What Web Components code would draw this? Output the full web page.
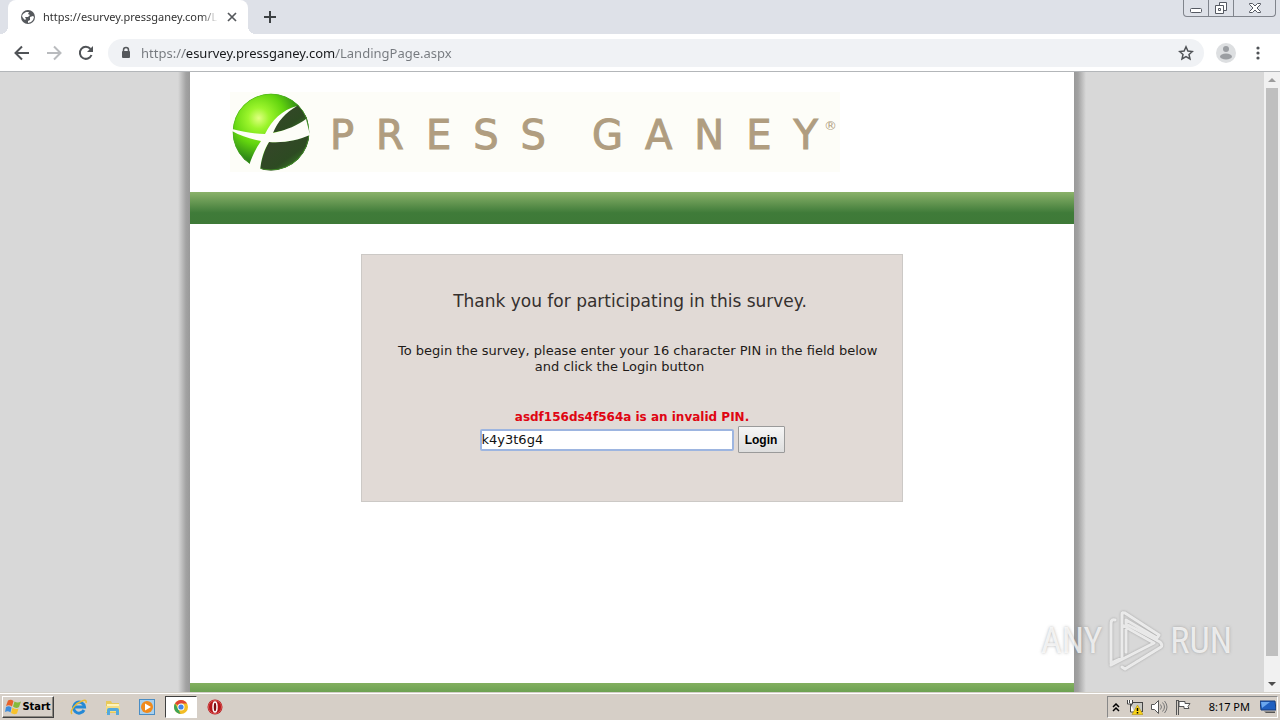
<!DOCTYPE html>
<html lang="en">
<head>
<meta charset="utf-8">
<title>Press Ganey Survey</title>
<style>
  body {
    margin: 0;
    height: 100vh;
    display: flex;
    flex-direction: column;
    overflow: hidden;
    font-family: "DejaVu Sans", Verdana, sans-serif;
    --ui-font: "Noto Sans", Tahoma, sans-serif;
  }
  .viewport {
    flex: 1;
    min-height: 0;
    display: flex;
    border-top: 1px solid #b3b6b9;
    background: #d8d8d8;
    position: relative;
  }
  survey-page { flex: 1; }
</style>
</head>
<body>
  <tab-strip><span>https://esurvey.pressganey.com/LandingPage</span></tab-strip>
  <address-bar url="https://esurvey.pressganey.com/LandingPage.aspx"></address-bar>
  <div class="viewport">
    <survey-page>
      <brand-logo slot="brand" name="PRESS GANEY"></brand-logo>
      <login-panel pin="k4y3t6g4">
        <span slot="title">Thank you for participating in this survey.</span>
        <span slot="help">To begin the survey, please enter your 16 character PIN in the field below<br>and click the Login button</span>
        <span slot="error">asdf156ds4f564a is an invalid PIN.</span>
      </login-panel>
    </survey-page>
    <scroll-bar></scroll-bar>
    <run-watermark></run-watermark>
  </div>
  <task-bar>8:17 PM</task-bar>

<script>
class TabStrip extends HTMLElement {
  constructor() {
    super();
    this.attachShadow({mode: 'open'});
  }

  connectedCallback() {
    this.shadowRoot.innerHTML = `
      <style>
        :host {
          display: flex;
          height: 34px;
          padding-left: 8px;
          background: #dee1e8;
          font: 11px/34px var(--ui-font);
          color: #333;
        }
        button { border: 0; padding: 0; background: none; display: flex; align-items: center; justify-content: center; }
        .tab {
          width: 240px;
          box-sizing: border-box;
          padding: 0 8px 0 12px;
          display: flex;
          align-items: center;
          background: #fff;
          border-radius: 8px 8px 0 0;
          position: relative;
        }
        .tab::before, .tab::after {
          content: "";
          position: absolute;
          bottom: 0;
          width: 8px;
          height: 8px;
        }
        .tab::before { right: 100%; background: radial-gradient(circle at 0 0, transparent 8px, #fff 8px); }
        .tab::after { left: 100%; background: radial-gradient(circle at 100% 0, transparent 8px, #fff 8px); }
        .title {
          flex: 1;
          min-width: 0;
          margin: 0 6px 0 7px;
          overflow: hidden;
          white-space: nowrap;
          -webkit-mask: linear-gradient(to left, transparent, #000 16px);
          mask: linear-gradient(to left, transparent, #000 16px);
        }
        .close { width: 16px; height: 16px; }
        .add { width: 28px; margin-left: 8px; }
        .window { display: flex; margin: 0 4px 0 auto; height: 17px; box-sizing: border-box; border: 1px solid #80848c; border-top: 0; border-radius: 0 0 4px 4px; }
        .window button { width: 24px; }
        .window button + button { border-left: 1px solid #80848c; width: 25px; }
        .window .exit { width: 42px; }
      </style>
      <div class="tab">
        <svg width="16" height="16" viewBox="0 0 16 16"><circle cx="8" cy="8" r="7" fill="#56595d"/><path d="M3 5l3-2 3 0-1 2 2 1-2 2-3 0 1 2-1 1-2-2-1-2zM10 8l3-1 1 1-1 3-2 2-3 1 0-2 2-1z" fill="#fff"/></svg>
        <div class="title"><slot></slot></div>
        <button class="close" aria-label="Close tab"><svg width="10" height="10" viewBox="0 0 10 10"><path d="M1 1l8 8M9 1l-8 8" stroke="#55585c" stroke-width="1.7"/></svg></button>
      </div>
      <button class="add" aria-label="New tab"><svg width="12" height="12" viewBox="0 0 12 12"><path d="M6 0v12M0 6h12" stroke="#3c4043" stroke-width="2"/></svg></button>
      <div class="window">
        <button aria-label="Minimize"><svg width="14" height="16" viewBox="0 0 14 16"><rect x="1.500" y="8.500" width="11" height="4" rx="1" fill="#fff" stroke="#555962"/></svg></button>
        <button aria-label="Restore"><svg width="14" height="16" viewBox="0 0 14 16"><path d="M5.500 2.500h7v8h-7z" fill="#fff" stroke="#555962"/><path d="M1.500 5.500h8v8h-8z" fill="#fff" stroke="#555962"/><path d="M4.500 8.500h2v2h-2z" fill="none" stroke="#555962"/></svg></button>
        <button class="exit" aria-label="Close"><svg width="14" height="16" viewBox="0 0 14 16"><path d="M1.500 3.500h3l2.500 2.500 2.500-2.500h3v1l-3.500 3.500 3.500 3.500v1h-3l-2.500-2.500-2.500 2.500h-3v-1l3.500-3.500-3.500-3.500z" fill="#fff" stroke="#555962"/></svg></button>
      </div>
    `;
  }
}
customElements.define('tab-strip', TabStrip);

class AddressBar extends HTMLElement {
  constructor() {
    super();
    this.attachShadow({mode: 'open'});
  }

  connectedCallback() {
    this.shadowRoot.innerHTML = `
      <style>
        :host {
          display: flex;
          align-items: center;
          height: 37px;
          padding: 0 8px;
          background: #fff;
        }
        button { border: 0; padding: 0; background: none; display: flex; align-items: center; justify-content: center; width: 28px; height: 28px; }
        .nav { display: flex; gap: 4px; margin-right: 8px; }
        .omnibox { flex: 1; display: flex; align-items: center; height: 28px; padding: 0 4px 0 12px; border-radius: 14px; background: #f0f2f5; }
        input {
          flex: 1;
          min-width: 0;
          margin-left: 9px;
          padding: 0;
          border: 0;
          outline: 0;
          font: 13px/20px var(--ui-font);
          color: transparent;
          /* dim the scheme and the path, keep the host dark */
          background: linear-gradient(to right, #75797e 44px, #17191c 44px, #17191c 195px, #75797e 195px) text;
          -webkit-background-clip: text;
        }
        .right { display: flex; align-items: center; gap: 4px; margin-left: 8px; }
      </style>
      <div class="nav">
        <button aria-label="Back"><svg width="16" height="16" viewBox="0 0 16 16"><path d="M15 8H2M8 1.500L1.500 8 8 14.500" fill="none" stroke="#505357" stroke-width="2"/></svg></button>
        <button aria-label="Forward"><svg width="16" height="16" viewBox="0 0 16 16"><path d="M1 8h13M8 1.500L14.500 8 8 14.500" fill="none" stroke="#b9bbbe" stroke-width="2"/></svg></button>
        <button aria-label="Reload"><svg width="16" height="16" viewBox="0 0 16 16"><path d="M13.500 10A6 6 0 1 1 12.500 4" fill="none" stroke="#505357" stroke-width="2"/><path d="M15 1v6H9z" fill="#505357"/></svg></button>
      </div>
      <div class="omnibox">
        <svg width="12" height="14" viewBox="0 0 12 14"><path d="M3.500 6V4a2.500 2.500 0 0 1 5 0v2" fill="none" stroke="#55585c" stroke-width="1.500"/><rect x="2" y="5" width="8" height="7" rx="1" fill="#55585c"/></svg>
        <input type="text" aria-label="Address" value="${this.getAttribute('url')}">
        <button aria-label="Bookmark this page"><svg width="16" height="16" viewBox="0 0 16 16"><path d="M8 1.800l1.900 4.200 4.500.5-3.400 3 1 4.500-4-2.300-4 2.300 1-4.500-3.400-3 4.500-.5z" fill="none" stroke="#505357" stroke-width="1.500"/></svg></button>
      </div>
      <div class="right">
        <button aria-label="Profile"><svg width="20" height="20" viewBox="0 0 20 20"><circle cx="10" cy="10" r="10" fill="#dddfe1"/><circle cx="10" cy="6" r="3" fill="#9b9ea2"/><ellipse cx="10" cy="13.500" rx="6" ry="3" fill="#9b9ea2"/></svg></button>
        <button aria-label="Menu"><svg width="4" height="14" viewBox="0 0 4 14" fill="#505357"><circle cx="2" cy="2" r="1.600"/><circle cx="2" cy="7" r="1.600"/><circle cx="2" cy="12" r="1.600"/></svg></button>
      </div>
    `;
  }
}
customElements.define('address-bar', AddressBar);

class BrandLogo extends HTMLElement {
  constructor() {
    super();
    this.attachShadow({mode: 'open'});
  }

  connectedCallback() {
    const words = this.getAttribute('name').split(' ').map(word =>
      `<span class="word">${word.slice(0, -1)}<span class="last">${word.slice(-1)}</span></span>`);
    this.shadowRoot.innerHTML = `
      <style>
        :host {
          display: flex;
          width: 610px;
          height: 80px;
          background: #fdfdf8;
          color: #b09d80;
          font: 40px/86px "DejaVu Sans", sans-serif;
          white-space: nowrap;
        }
        svg { margin: 1px 20px 0 2px; flex: none; }
        .name { display: flex; gap: 46px; -webkit-text-stroke: 1px #b09d80; }
        .word { letter-spacing: 22px; }
        .last { letter-spacing: 0; }
        sup { margin-left: 6px; font: 13px/16px "DejaVu Sans", sans-serif; padding-top: 26px; }
      </style>
      <svg width="78" height="78" viewBox="0 0 78 78">
        <defs>
          <radialGradient id="ball" cx=".34" cy=".32" r=".68">
            <stop offset="0" stop-color="#e0ff80"/>
            <stop offset=".2" stop-color="#9cf52c"/>
            <stop offset=".5" stop-color="#62d40e"/>
            <stop offset=".8" stop-color="#2f8a16"/>
            <stop offset="1" stop-color="#2b6a1c"/>
          </radialGradient>
          <linearGradient id="dark" x1="0" y1="0" x2="1" y2="1">
            <stop offset="0" stop-color="#38452c"/>
            <stop offset=".6" stop-color="#2d4a22"/>
            <stop offset="1" stop-color="#3d9e24"/>
          </linearGradient>
          <clipPath id="round"><circle cx="39" cy="39" r="38.500"/></clipPath>
        </defs>
        <g clip-path="url(#round)">
          <circle cx="39" cy="39" r="38.500" fill="url(#ball)"/>
          <path d="M40 40C46 27 54 19 66 12L78 28C66 34 54 37 40 40z" fill="url(#dark)"/>
          <path d="M28 78C30 64 33 56 37 49 54 50 66 47 78 42V78z" fill="url(#dark)"/>
          <circle cx="39" cy="39" r="38" fill="none" stroke="#4fae2c" stroke-opacity=".6"/>
        </g>
        <path d="M0 36C12 39 23 41 33 41 40 27 50 17 65 13 53 20 46 28 41 40 55 37 66 32 74 26L78 42C66 47 54 50 37 49 32 57 29 66 28 78L17 73C20 63 24 55 29 48 18 46 9 43 0 38z" fill="#fdfdf8"/>
      </svg>
      <div class="name">${words.join(' ')}</div><sup>®</sup>
    `;
  }
}
customElements.define('brand-logo', BrandLogo);

class SurveyPage extends HTMLElement {
  constructor() {
    super();
    this.attachShadow({mode: 'open'});
  }

  connectedCallback() {
    this.shadowRoot.innerHTML = `
      <style>
        :host { display: flex; justify-content: center; min-width: 0; }
        .edge { width: 12px; background: linear-gradient(to right, #999 0, #a2a2a2 4px, #d8d8d8 12px); }
        .edge.left { background: linear-gradient(to left, #999 0, #a2a2a2 4px, #d8d8d8 12px); }
        .sheet { flex: 0 1 884px; display: flex; flex-direction: column; background: #fff; }
        header { padding: 20px 40px; }
        .band { height: 32px; background: linear-gradient(#8bb26a, #3f7b39 65%, #3e7937); }
        main { flex: 1; padding-top: 30px; display: flex; justify-content: center; align-items: flex-start; }
        footer { height: 9px; background: linear-gradient(#83b060, #6da152); }
      </style>
      <div class="edge left"></div>
      <div class="sheet">
        <header><slot name="brand"></slot></header>
        <div class="band"></div>
        <main><slot></slot></main>
        <footer></footer>
      </div>
      <div class="edge"></div>
    `;
  }
}
customElements.define('survey-page', SurveyPage);

class LoginPanel extends HTMLElement {
  constructor() {
    super();
    this.attachShadow({mode: 'open'});
  }

  connectedCallback() {
    this.shadowRoot.innerHTML = `
      <style>
        :host {
          display: block;
          box-sizing: border-box;
          width: 542px;
          padding: 36px 0 48px;
          border: 1px solid #ccc9c6;
          background: #e1dad6;
          text-align: center;
          color: #1e1a18;
          font-size: 13px;
          line-height: 16px;
        }
        h1 { margin: 0 4px 32px 0; font-size: 17px; line-height: 20px; font-weight: normal; color: #35302e; }
        p { margin: 0 61px 34px 36px; white-space: nowrap; }
        .error { font-weight: bold; font-size: 12px; color: #df0512; }
        .row { display: flex; justify-content: center; align-items: center; gap: 4px; margin-top: 1px; }
        input {
          box-sizing: border-box;
          width: 254px;
          height: 22px;
          padding: 0;
          border: 2px solid #9db5e0;
          border-radius: 2px;
          outline: 0;
          background: #fff;
          color: #111;
          font: 13px/18px "DejaVu Sans", sans-serif;
        }
        button {
          width: 47px;
          height: 27px;
          padding: 0;
          border: 1px solid #9a9a9a;
          border-radius: 1px;
          background: linear-gradient(#f6f6f6, #dedede);
          color: #000;
          font: bold 12px/16px "Liberation Sans", Arial, sans-serif;
        }
      </style>
      <h1><slot name="title"></slot></h1>
      <p><slot name="help"></slot></p>
      <form onsubmit="return false">
        <label class="error" for="pin"><slot name="error"></slot></label>
        <div class="row">
          <input id="pin" type="text" value="${this.getAttribute('pin')}">
          <button>Login</button>
        </div>
      </form>
    `;
  }
}
customElements.define('login-panel', LoginPanel);

class ScrollBar extends HTMLElement {
  constructor() {
    super();
    this.attachShadow({mode: 'open'});
  }

  connectedCallback() {
    this.shadowRoot.innerHTML = `
      <style>
        :host { display: flex; flex-direction: column; width: 16px; background: #f1f1f1; }
        button { height: 16px; padding: 0; border: 0; background: none; display: flex; align-items: center; justify-content: center; }
        .track { flex: 1; padding: 0 2px 20px; display: flex; }
        .thumb { flex: 1; background: #bfbfbf; }
      </style>
      <button aria-label="Scroll up"><svg width="8" height="4" viewBox="0 0 8 4"><path d="M0 4l4-4 4 4z" fill="#9c9c9c"/></svg></button>
      <div class="track"><div class="thumb"></div></div>
      <button aria-label="Scroll down"><svg width="8" height="4" viewBox="0 0 8 4"><path d="M0 0h8L4 4z" fill="#4d4d4d"/></svg></button>
    `;
  }
}
customElements.define('scroll-bar', ScrollBar);

// Sits over the page in the bottom right corner
class RunWatermark extends HTMLElement {
  constructor() {
    super();
    this.attachShadow({mode: 'open'});
  }

  connectedCallback() {
    this.shadowRoot.innerHTML = `
      <style>
        :host {
          position: absolute;
          right: 48px;
          bottom: 20px;
          display: flex;
          align-items: center;
          gap: 6px;
          pointer-events: none;
          color: rgba(255, 255, 255, .75);
          font: 36px/62px "Roboto Condensed", "Noto Sans CJK SC", sans-serif;
          text-shadow: 0 0 3px rgba(110, 110, 110, .5);
        }
        svg { filter: drop-shadow(0 0 1px rgba(110, 110, 110, .6)); }
      </style>
      <span>ANY</span>
      <svg width="56" height="62" viewBox="0 0 56 62" fill="none" stroke="#f4f4f4" stroke-opacity=".85" stroke-width="3" stroke-linecap="round" stroke-linejoin="round">
        <path d="M7 10C3 9 3 12 3 15V53L14 48V4Q14 2 17 3L51 25M14 15L46 33 3 55M51 25L49 28 18 10V42M14 57L17 59 53 37Q55 35 52 32L20 15"/>
      </svg>
      <span>RUN</span>
    `;
  }
}
customElements.define('run-watermark', RunWatermark);

class TaskBar extends HTMLElement {
  constructor() {
    super();
    this.attachShadow({mode: 'open'});
  }

  connectedCallback() {
    this.shadowRoot.innerHTML = `
      <style>
        :host {
          display: flex;
          align-items: center;
          height: 26px;
          padding: 0 2px;
          border-top: 1px solid #fff;
          margin-top: 1px;
          box-shadow: 0 -1px #d4d0c8;
          background: #d6cfc7;
          color: #000;
          font: 11px/16px var(--ui-font);
        }
        button { box-sizing: border-box; height: 22px; padding: 0; border: 0; background: none; display: flex; align-items: center; justify-content: center; }
        .start {
          gap: 1px;
          width: 52px;
          border: 1px solid;
          border-color: #fff #404040 #404040 #fff;
          box-shadow: inset -1px -1px #8c8880;
          font: bold 11px/16px "DejaVu Sans Condensed", Tahoma, sans-serif;
          color: #000;
        }
        .apps { display: flex; margin-left: 9px; gap: 2px; }
        .apps button { width: 32px; }
        .apps .active { background: #fff; border: 1px solid; border-color: #404040 #fff #fff #404040; }
        .tray { display: flex; align-items: center; box-sizing: border-box; height: 22px; margin-left: auto; padding: 0 1px 0 3px; border: 1px solid; border-color: #888 #fff #fff #888; }
        .tray button { width: 24px; }
        .tray .more { width: 10px; margin-right: 2px; }
        time { margin: 0 10px 0 14px; }
      </style>
      <button class="start">
        <svg width="16" height="16" viewBox="0 0 16 16"><path d="M3 1.500q3-1.500 5.500.5L7 7.500Q4 5.500 1 7z" fill="#e8622b"/><path d="M9.500 2.500q3 2 6.500 0L14 8q-3 2-6-.5z" fill="#86b93b"/><path d="M1 8q3-1.500 5.500.5L5.500 13.500Q3 11.500 0 13z" fill="#3e8ddd"/><path d="M7.500 8.500q3 2.500 6 1L12 14.500q-3 1.500-6-.5z" fill="#f7c22c"/></svg>
        Start
      </button>
      <div class="apps">
        <button aria-label="Internet Explorer"><svg width="18" height="16" viewBox="0 0 18 16"><path d="M14 11A5.500 5.500 0 1 1 14.500 8H5" fill="none" stroke="#2489d6" stroke-width="3"/><path d="M2 15C-1 12 6 4 12 2q5-2 4 2" fill="none" stroke="#e9bb35" stroke-width="1.500"/></svg></button>
        <button aria-label="Explorer"><svg width="16" height="16" viewBox="0 0 16 16"><path d="M1 2h5l1 2h7v10H1z" fill="#e8c95a"/><path d="M2 5h12v3H2z" fill="#fff3b8"/><path d="M1 7h14v6H1z" fill="#f3dd84"/><path d="M2 16V11q0-2 2-2h8q2 0 2 2v5h-3v-4H5v4z" fill="#54a9dc"/></svg></button>
        <button aria-label="Media Player"><svg width="16" height="16" viewBox="0 0 16 16"><rect x=".5" y=".5" width="15" height="15" fill="#a8d0ee" stroke="#4a8dc4"/><circle cx="8" cy="8" r="6" fill="#f08a1c"/><path d="M6 4.500v7L12 8z" fill="#fff"/></svg></button>
        <button class="active" aria-label="Chrome"><svg width="14" height="14" viewBox="0 0 14 14"><circle cx="7" cy="7" r="7" fill="#f3bd24"/><path d="M7 7L1 3.500A7 7 0 0 1 13 3.500H7z" fill="#df4535"/><path d="M1 3.500L5 10.500 6.500 14A7 7 0 0 1 1 3.500z" fill="#3da457"/><circle cx="7" cy="7" r="3.500" fill="#fff"/><circle cx="7" cy="7" r="2.600" fill="#4285e8"/></svg></button>
        <button aria-label="Opera"><svg width="16" height="16" viewBox="0 0 16 16"><circle cx="8" cy="8" r="7.500" fill="#b4161b"/><circle cx="8" cy="8" r="6.500" fill="none" stroke="#db5956"/><ellipse cx="8" cy="8" rx="2" ry="5" fill="#7d0c11" stroke="#fff" stroke-width="1.500"/></svg></button>
      </div>
      <div class="tray">
        <button class="more" aria-label="Show hidden icons"><svg width="8" height="9" viewBox="0 0 8 9"><path d="M1 4l3-3 3 3M1 8l3-3 3 3" fill="none" stroke="#000" stroke-width="1.500"/></svg></button>
        <button aria-label="Network"><svg width="16" height="16" viewBox="0 0 16 16"><rect x="4.500" y="3.500" width="11" height="9" fill="#c9c9c4" stroke="#444"/><path d="M.5 1v4h5V1M2.500 1v3M3.500 5v8h4" fill="#fff" stroke="#444"/><path d="M10.500 6L16 15.500H5z" fill="#f8d317" stroke="#a98400" stroke-width=".5"/><path d="M10.500 9v3M10.500 13v1.500" stroke="#000" stroke-width="1.500"/></svg></button>
        <button aria-label="Volume"><svg width="18" height="16" viewBox="0 0 18 16"><path d="M1.500 5.500h3l4-4v13l-4-4h-3z" fill="#fff" stroke="#555"/><path d="M10.500 5.500q2 2.500 0 5M12.500 3.500q4 4.500 0 9M14.500 2q5 6 0 12" fill="none" stroke="#777"/></svg></button>
        <button aria-label="Action Center"><svg width="16" height="16" viewBox="0 0 16 16"><path d="M1.500 1v15M3.500 1v15M1 1.500h3" stroke="#555"/><path d="M4 2.500h6v2h5l-2 3 1 2H9v-2H4z" fill="#fff" stroke="#555"/></svg></button>
        <time><slot></slot></time>
        <svg width="16" height="14" viewBox="0 0 16 14"><path d="M0 1h15l1 9H1z" fill="#1f5fc0" stroke="#163b78"/><path d="M1 2h9L2 8z" fill="#6aa7ee"/><path d="M4 11.500h11V13H6z" fill="#555"/></svg>
      </div>
    `;
  }
}
customElements.define('task-bar', TaskBar);
</script>
</body>
</html>
